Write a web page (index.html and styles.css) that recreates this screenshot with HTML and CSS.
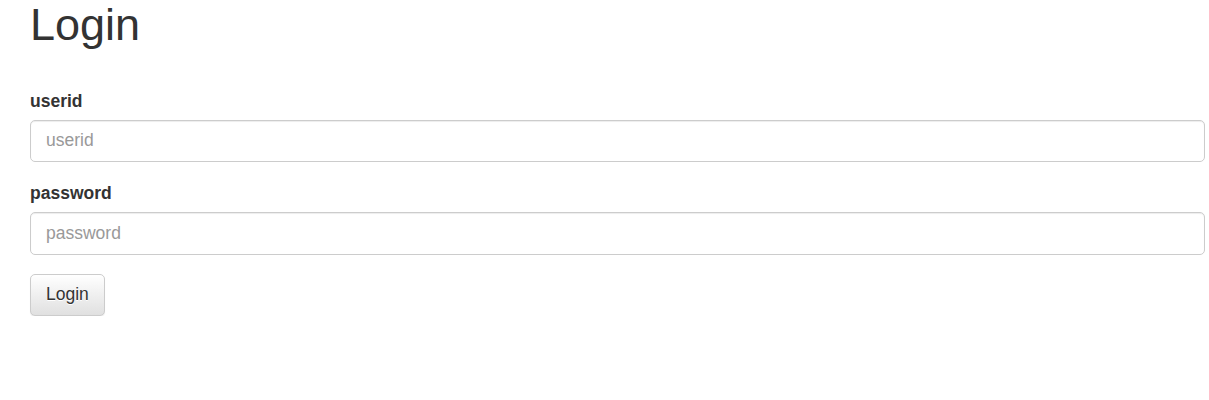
FILE: index.html
```html
<!DOCTYPE html>
<html>
<head>
<meta charset="utf-8">
<title>Login</title>
<link rel="stylesheet" href="styles.css">
</head>
<body>
<div class="page">
  <h1 class="title">Login</h1>
  <form class="login-form">
    <div class="form-group">
      <label class="field-label" for="userid">userid</label>
      <input class="form-control" id="userid" type="text" placeholder="userid">
    </div>
    <div class="form-group">
      <label class="field-label" for="password">password</label>
      <input class="form-control" id="password" type="password" placeholder="password">
    </div>
    <button class="btn" type="button">Login</button>
  </form>
</div>
</body>
</html>
```

FILE: styles.css
```css
html, body {
  margin: 0;
  padding: 0;
  background: #fff;
}
body {
  font-family: "Liberation Sans", Arial, Helvetica, sans-serif;
  font-size: 17.5px;
  line-height: 25px;
  color: #333;
}
.page {
  padding: 0 4px 0 30px;
}
.title {
  font-family: "Liberation Sans", Arial, Helvetica, sans-serif;
  font-weight: 500;
  font-size: 45px;
  line-height: 49.5px;
  margin: 0;
  padding-bottom: 39px;
  color: #333;
}
.login-form {
  margin: 0;
}
.form-group {
  margin-bottom: 19px;
}
.field-label {
  display: block;
  font-weight: bold;
  margin-bottom: 6px;
  line-height: 25px;
}
.form-control {
  display: block;
  box-sizing: border-box;
  width: 100%;
  height: 42.5px;
  padding: 7.5px 15px;
  font-family: "Liberation Sans", Arial, Helvetica, sans-serif;
  font-size: 17.5px;
  line-height: 25px;
  color: #555;
  background: #fff;
  border: 1.25px solid #ccc;
  border-radius: 5px;
  box-shadow: inset 0 1px 1px rgba(0, 0, 0, 0.075);
  margin: 0;
  outline: none;
}
.form-control::placeholder {
  color: #999;
  opacity: 1;
}
.btn {
  display: inline-block;
  box-sizing: border-box;
  height: 42.5px;
  padding: 7.5px 15px;
  font-family: "Liberation Sans", Arial, Helvetica, sans-serif;
  font-size: 17.5px;
  line-height: 25px;
  color: #333;
  text-shadow: 0 1px 0 #fff;
  background-color: #fff;
  background-image: linear-gradient(to bottom, #fff 0, #e0e0e0 100%);
  border: 1.25px solid #ccc;
  border-radius: 5px;
  box-shadow: inset 0 1px 0 rgba(255, 255, 255, 0.15), 0 1px 1px rgba(0, 0, 0, 0.075);
  cursor: pointer;
  margin: 0;
}
```
